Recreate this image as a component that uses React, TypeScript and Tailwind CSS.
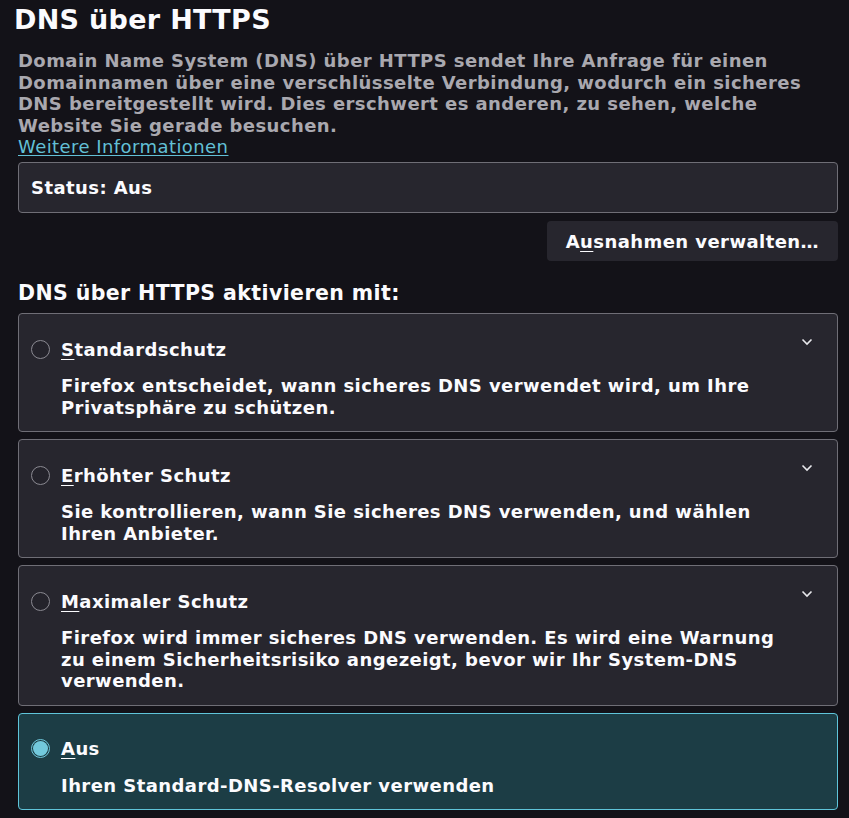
import React from "react";

type Option = {
  key: string;
  rest: string;
  desc: string;
  selected?: boolean;
  expandable?: boolean;
};

const options: Option[] = [
  {
    key: "S",
    rest: "tandardschutz",
    desc: "Firefox entscheidet, wann sicheres DNS verwendet wird, um Ihre Privatsphäre zu schützen.",
    expandable: true,
  },
  {
    key: "E",
    rest: "rhöhter Schutz",
    desc: "Sie kontrollieren, wann Sie sicheres DNS verwenden, und wählen Ihren Anbieter.",
    expandable: true,
  },
  {
    key: "M",
    rest: "aximaler Schutz",
    desc: "Firefox wird immer sicheres DNS verwenden. Es wird eine Warnung zu einem Sicherheitsrisiko angezeigt, bevor wir Ihr System-DNS verwenden.",
    expandable: true,
  },
  {
    key: "A",
    rest: "us",
    desc: "Ihren Standard-DNS-Resolver verwenden",
    selected: true,
  },
];

function Chevron() {
  return (
    <svg width="12" height="8" viewBox="0 0 12 8" className="text-[#e8e8ec]">
      <path d="M1.5 1.5 L6 6 L10.5 1.5" fill="none" stroke="currentColor" strokeWidth="1.6" />
    </svg>
  );
}

function Radio({ checked }: { checked?: boolean }) {
  if (checked) {
    return (
      <span className="flex h-[19px] w-[19px] shrink-0 items-center justify-center rounded-full border border-[#6fc8dc]">
        <span className="h-[15px] w-[15px] rounded-full bg-[#72c9dc]" />
      </span>
    );
  }
  return <span className="h-[19px] w-[19px] shrink-0 rounded-full border border-[#8b8a92] bg-[#24232b]" />;
}

function OptionCard({ opt }: { opt: Option }) {
  return (
    <div
      className={
        opt.selected
          ? "rounded-[4px] border border-[#5fc5da] bg-[#1c3d45] pl-[12px] pr-[24px] pt-[24px] pb-[13px]"
          : "rounded-[4px] border border-[#6f6e76] bg-[#27262e] pl-[12px] pr-[24px] pt-[24px] pb-[13px]"
      }
    >
      <div className="flex h-[22px] items-center gap-[11px]">
        <Radio checked={opt.selected} />
        <span className="text-[#fbfbfe]">
          <span className="underline decoration-[1px] underline-offset-[3px]">{opt.key}</span>
          {opt.rest}
        </span>
        <span className="flex-1" />
        {opt.expandable && (
          <span className="-mt-[14px]">
            <Chevron />
          </span>
        )}
      </div>
      <p className="ml-[30px] mt-[15px] max-w-[725px] leading-[21.5px] text-[#fbfbfe]">{opt.desc}</p>
    </div>
  );
}

export default function App() {
  return (
    <div
      className="min-h-screen bg-[#131218] pb-[8px] pl-[18px] pr-[11px] text-[18px] font-bold tracking-[0.43px] text-[#fbfbfe]"
      style={{ fontFamily: '"DejaVu Sans", sans-serif' }}
    >
      <h1 className="-ml-[4px] pt-[2px] text-[27px] leading-[36px] tracking-[0.3px] text-[#fbfbfe]">DNS über HTTPS</h1>
      <p className="mt-[12px] leading-[21.5px] text-[#a9a8af]">
        Domain Name System (DNS) über HTTPS sendet Ihre Anfrage für einen Domainnamen über eine verschlüsselte
        Verbindung, wodurch ein sicheres DNS bereitgestellt wird. Dies erschwert es anderen, zu sehen, welche
        Website Sie gerade besuchen.
      </p>
      <a href="#" className="block font-normal leading-[22px] text-[#62c0d6] underline underline-offset-[2px]">
        Weitere Informationen
      </a>
      <div className="mt-[4px] flex h-[51px] items-center rounded-[4px] border border-[#6f6e76] bg-[#27262e] px-[12px]">
        Status: Aus
      </div>
      <div className="mt-[8px] flex justify-end">
        <button className="h-[40px] rounded-[4px] bg-[#27262e] px-[19px] font-bold tracking-[0.43px] text-[#fbfbfe]">
          A<span className="underline underline-offset-[3px]">u</span>snahmen verwalten…
        </button>
      </div>
      <h2 className="mt-[20px] text-[20.5px] leading-[24px] tracking-[0.4px]">DNS über HTTPS aktivieren mit:</h2>
      <div className="mt-[8px] flex flex-col gap-[7px]">
        {options.map((o) => (
          <OptionCard key={o.key} opt={o} />
        ))}
      </div>
    </div>
  );
}
